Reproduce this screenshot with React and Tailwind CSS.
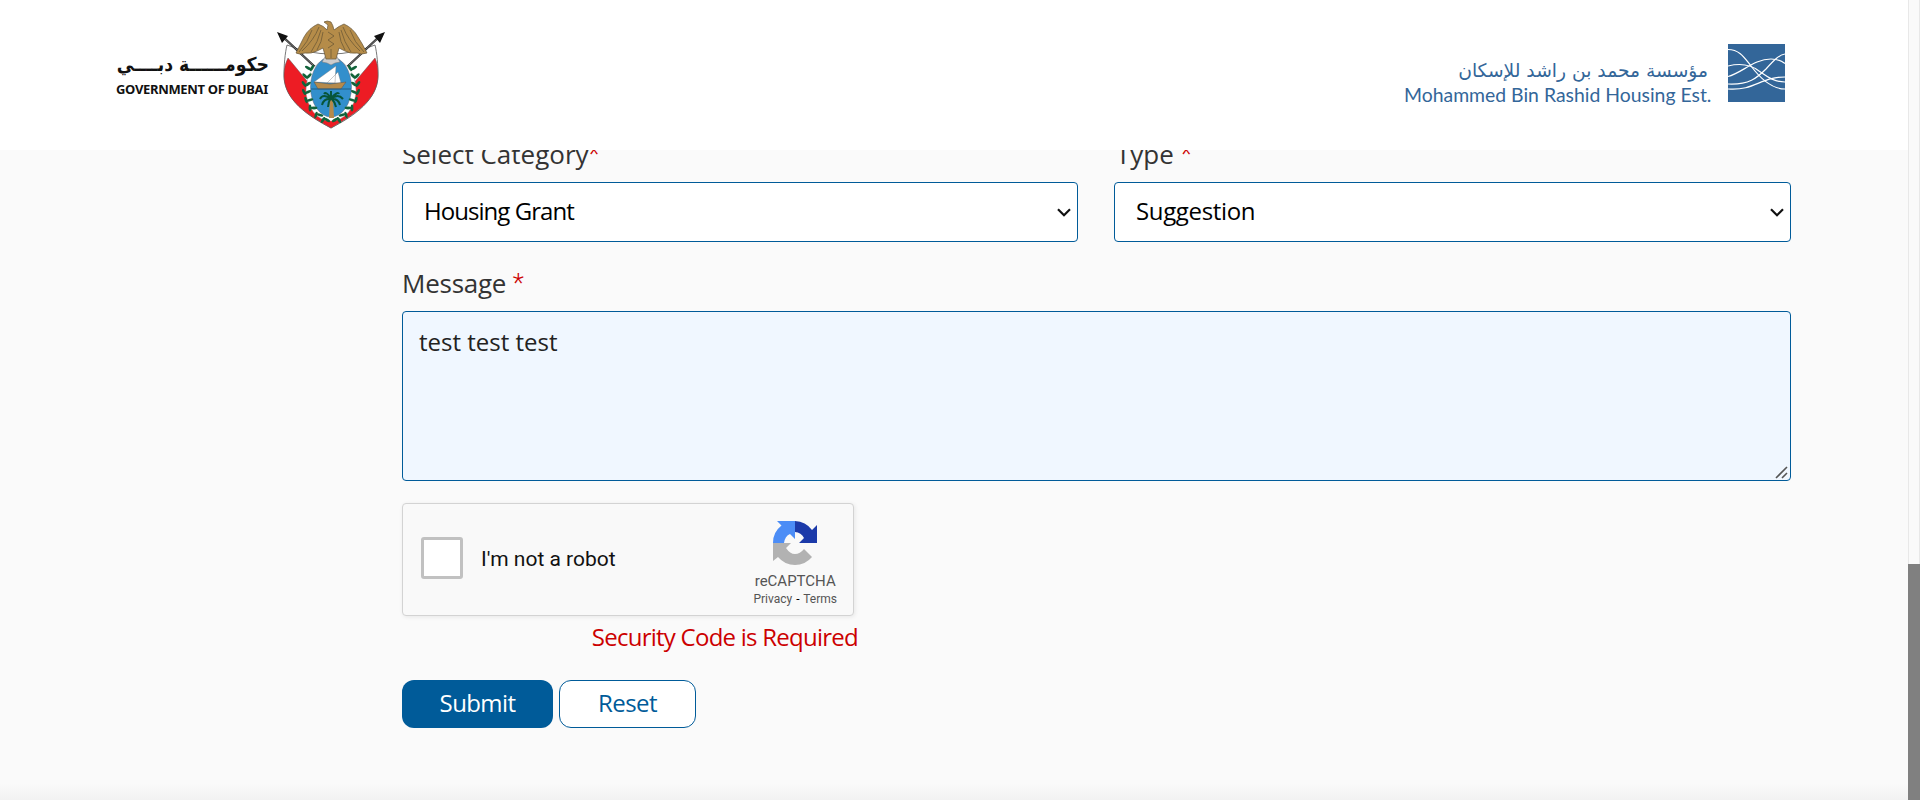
import React from "react";

function Emblem() {
  const leaves = [
    [33, 58, 60], [30, 66, 75], [29, 74, 85], [29, 82, 95], [31, 90, 105], [35, 98, 120], [41, 105, 135], [48, 110, 150],
  ];
  return (
    <svg viewBox="0 0 125 125" className="h-[125px] w-[125px] shrink-0" aria-hidden="true">
      <path d="M17 35C15 43 14 55 14 65C14 90 38 106 61 118C84 106 108 90 108 65C108 55 107 43 105 35Q83 44 61 44Q39 44 17 35Z" fill="#fff" stroke="#555" strokeWidth=".8" />
      <path d="M18 48L61 100L105 48C108 55 108 60 108 67C107 91 83 105 61 118C38 105 15 91 14 67C14 59 15 54 18 48Z" fill="#ed1c24" stroke="#555" strokeWidth=".5" />
      <g stroke="#222" fill="none">
        <path d="M11 25L45 57M111 25L77 57" strokeWidth="2.3" />
        <path d="M12 26L45 57M110 26L77 57" stroke="#aaa" strokeWidth=".7" />
      </g>
      <path d="M7 22L18 26L12 33ZM115 22L104 26L110 33Z" fill="#111" />
      <ellipse cx="61" cy="80" rx="25" ry="31" fill="#fff" stroke="#999" strokeWidth=".5" />
      <ellipse cx="61" cy="77" rx="20.5" ry="30" fill="#328fcc" stroke="#667" strokeWidth=".5" />
      {leaves.map(([x, y, r]) => (
        <g key={y} fill="#11633a">
          <ellipse cx={x + 5} cy={y} rx="3.4" ry="1.4" transform={`rotate(${r - 30} ${x + 5} ${y})`} />
          <ellipse cx={x + 9} cy={y} rx="3.4" ry="1.4" transform={`rotate(${r - 120} ${x + 9} ${y})`} />
          <ellipse cx={122 - x - 5} cy={y} rx="3.4" ry="1.4" transform={`rotate(${30 - r} ${117 - x} ${y})`} />
          <ellipse cx={122 - x - 9} cy={y} rx="3.4" ry="1.4" transform={`rotate(${120 - r} ${113 - x} ${y})`} />
        </g>
      ))}
      <path d="M44 72L66 56L65 73ZM57 73L68 62L71 73Z" fill="#fff" stroke="#777" strokeWidth=".4" />
      <path d="M44 72L60 74L76 72L71 79H48Z" fill="#b58a4b" stroke="#555" strokeWidth=".5" />
      <path d="M41 79H81" stroke="#225d83" />
      <path d="M60 88H63L64 108H59Z" fill="#b58a4b" />
      <path d="M61 89Q54 88 52 95M61 89Q53 83 50 89M61 88Q56 81 54 84M61 88Q68 81 69 84M61 89Q68 83 73 89M61 89Q68 88 70 95M61 88Q58 92 58 97M61 88Q65 92 66 97M61 88V81" fill="none" stroke="#07553a" strokeWidth="2" />
      <path d="M56 45L66 45L70 52L65 53L61 55L57 53L52 52Z" fill="#ccc" stroke="#777" strokeWidth=".5" />
      <path d="M54 12Q57 10 61 12Q63 15 64 20Q69 16 74 14Q83 18 88 27Q92 33 97 43Q91 45 87 43Q80 44 75 41L69 38L66 49H56L53 38L47 41Q41 44 35 43Q29 45 26 43Q31 33 34 27Q39 18 48 14Q54 16 57 20L58 15Z" fill="#b58c49" stroke="#65563b" strokeWidth=".7" />
      <path d="M49 17Q44 30 32 41M51 20Q48 32 41 42M53 22Q52 32 47 40M73 17Q78 30 90 41M71 20Q74 32 81 42M69 22Q70 32 75 40M58 22L64 26L58 30L64 34L58 38M61 39V48M42 20Q38 32 29 42M80 20Q84 32 94 42" fill="none" stroke="#6e5a36" strokeWidth=".8" />
    </svg>
  );
}

function WaveLogo() {
  return (
    <svg viewBox="0 0 57 58" className="h-[58px] w-[57px] shrink-0" aria-hidden="true">
      <rect width="57" height="58" fill="#336699" />
      <g fill="none" stroke="#fff" strokeWidth="1.2">
        <path d="M0 5.5C11 5.5 16 13 23 22C32 34 43 45 57 45" />
        <path d="M0 22C12 19 22 20 31 27C41 34 47 38 57 38" />
        <path d="M0 32.500C14 29 26 15 43 15C50 15 54 17 57 19.500" />
        <path d="M0 40C21 41 29 34 38 25C46 16 51 11 57 10" />
        <path d="M0 45C27 47 32 33 57 33" />
      </g>
    </svg>
  );
}

function Chevron() {
  return (
    <svg viewBox="0 0 14 9" className="h-[9px] w-[14px] shrink-0" aria-hidden="true">
      <path d="M1 1.2L7 7.2L13 1.2" fill="none" stroke="#111" strokeWidth="2.2" />
    </svg>
  );
}

function Label({ className, children }) {
  return (
    <div className={`h-[45px] shrink-0 text-[26px] leading-[35px] ${className}`}>
      {children}
      <span className="align-[1px] font-['Roboto',sans-serif] text-[26px] font-light leading-none text-[#cc0000]">*</span>
    </div>
  );
}

function Select({ className, children }) {
  return (
    <button className={`flex h-[60px] w-full items-center justify-between rounded-[4px] border border-[#005b99] bg-white pl-[21px] pr-[6px] text-left text-[24px] text-black ${className}`}>
      <span className="pb-[2px]">{children}</span>
      <Chevron />
    </button>
  );
}

function RecaptchaLogo() {
  return (
    <svg viewBox="0 0 44 45" className="h-[45px] w-[44px]" aria-hidden="true">
      <path d="M22 0A22 22 0 0 1 39 9L44 4V22H26L31 17A11 11 0 0 0 22 11Z" fill="#1c3aa9" />
      <path d="M22 0H4L8.500 4.500A22 22 0 0 0 0 22H11Q12 15 17 13L22 18Z" fill="#4c8df6" />
      <path d="M0 22H18L13 27Q17 33 22 33Q27 33 31 28L39 36A22 22 0 0 1 5 36L0 40Z" fill="#b2b2b2" />
    </svg>
  );
}

export default function App() {
  return (
    <div className="flex h-[800px] w-full overflow-hidden bg-[#fafafa] font-['Open_Sans',sans-serif]">
      <div className="flex min-w-0 flex-1 flex-col">
        <header className="relative z-10 flex h-[150px] shrink-0 items-start justify-between bg-white pl-[116px] pr-[123px]">
          <div className="flex items-start">
            <div className="w-[154px] pt-[49px] text-[#111]">
              <div lang="ar" dir="rtl" className="h-[31px] whitespace-nowrap pr-px font-['DejaVu_Sans',sans-serif] text-[19.2px] font-bold leading-[32px] [font-stretch:84%]">حكومــــــة دبــــي</div>
              <div className="whitespace-nowrap font-['Noto_Sans',sans-serif] text-[13px] font-bold leading-[19px] tracking-[-0.33px]">GOVERNMENT OF DUBAI</div>
            </div>
            <div className="pt-[10px]"><Emblem /></div>
          </div>
          <div className="flex items-start gap-[17px] pt-[44px] text-[#336699]">
            <div className="w-[307px] pt-[12px] font-['Lato',sans-serif]">
              <div lang="ar" dir="rtl" className="h-[27px] whitespace-nowrap pr-[3px] font-['DejaVu_Sans',sans-serif] text-[18.7px] leading-[30px]">مؤسسة محمد بن راشد للإسكان</div>
              <div className="whitespace-nowrap text-[19.4px] leading-[24px]">Mohammed Bin Rashid Housing Est.</div>
            </div>
            <WaveLogo />
          </div>
        </header>
        <main className="flex min-h-0 flex-1 flex-col pl-[402px] pr-[117px] text-[#333]">
          <div className="grid grid-cols-[676px_1fr] gap-9">
            <div>
              <Label className="-mt-[13px]">Select Category</Label>
              <Select className="tracking-[-0.95px]">Housing Grant</Select>
            </div>
            <div>
              <Label className="-mt-[13px] pl-[2px]">Type{" "}</Label>
              <Select className="tracking-[-0.35px]">Suggestion</Select>
            </div>
          </div>
          <Label className="mt-[24px] tracking-[-0.25px]">Message{" "}</Label>
          <div className="relative h-[170px] shrink-0">
            <textarea className="block h-full w-full resize-none rounded-[4px] border border-[#005b99] bg-[#f0f7ff] px-4 pt-[12px] text-[24px] leading-[36px] text-[#222] outline-none" defaultValue="test test test" />
            <svg viewBox="0 0 13 13" className="pointer-events-none absolute bottom-[2px] right-[3px] h-[13px] w-[13px]" aria-hidden="true">
              <path d="M1 12L12 1M7 12L12 7" stroke="#555" strokeWidth="1.6" />
            </svg>
          </div>
          <div className="mt-[22px] flex h-[113px] w-[452px] shrink-0 justify-between rounded-[4px] border border-[#d3d3d3] bg-[#f9f9f9] pl-[18px] pr-[16px] font-['Roboto',sans-serif] shadow-[1px_1px_4px_rgba(0,0,0,0.08)]">
            <div className="flex items-center gap-[18px] pb-[4px]">
              <span className="h-[42px] w-[42px] rounded-[3px] border-[3px] border-[#c1c1c1] bg-white" />
              <span className="pt-[4px] text-[21px] text-[#111]">I'm not a robot</span>
            </div>
            <div className="flex flex-col items-center pt-[17px] text-[#555]">
              <RecaptchaLogo />
              <span className="mt-[6px] text-[15px] leading-[18px]">reCAPTCHA</span>
              <span className="text-[12px] leading-[18px]">Privacy <span className="px-px text-black">-</span> Terms</span>
            </div>
          </div>
          <div className="mt-[3px] h-[37px] w-[456px] shrink-0 text-right text-[24px] tracking-[-0.75px] leading-[36px] text-[#cc0000]">Security Code is Required</div>
          <div className="mt-[24px] flex gap-[6px] text-[24px] tracking-[-0.6px]">
            <button className="h-12 w-[151px] rounded-[12px] bg-[#005b99] pb-[2px] text-white">Submit</button>
            <button className="h-12 w-[137px] rounded-[12px] border border-[#005b99] bg-white pb-[2px] text-[#005b99]">Reset</button>
          </div>
          <div className="-ml-[402px] -mr-[117px] mt-auto h-[16px] shrink-0 bg-linear-to-b from-[#fafafa] to-[#f2f2f2]" />
        </main>
      </div>
      <div className="flex w-3 shrink-0 flex-col justify-end border-x border-[#e8e8e8] bg-[#fafafa]">
        <div className="-mx-px h-[236px] bg-[#808080]" />
      </div>
    </div>
  );
}
